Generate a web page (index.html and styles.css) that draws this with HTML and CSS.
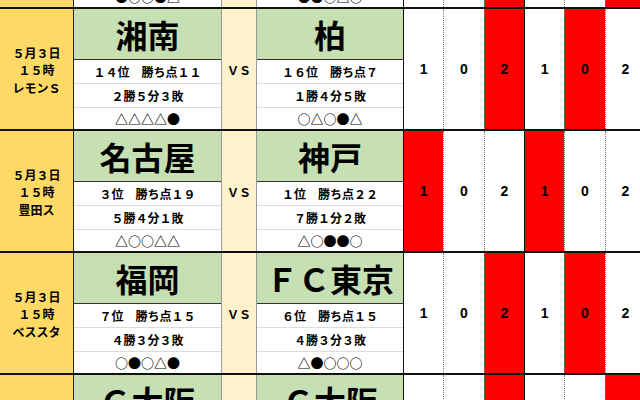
FILE: index.html
```html
<!DOCTYPE html>
<html lang="ja">
<head>
<meta charset="utf-8">
<title>試合予想</title>
<link rel="stylesheet" href="styles.css">
</head>
<body>
<div class="sheet">

  <div class="block">
    <div class="date"><span>５月３日</span><span>１４時</span><span>カシマ</span></div>
    <div class="team home">
      <div class="name">鹿島</div>
      <div class="info">５位　勝ち点１７</div>
      <div class="info">５勝２分３敗</div>
      <div class="info last">●○○●△</div>
    </div>
    <div class="vs">ＶＳ</div>
    <div class="team away">
      <div class="name">京都</div>
      <div class="info">１２位　勝ち点１２</div>
      <div class="info">４勝０分６敗</div>
      <div class="info last">●●○△○</div>
    </div>
    <div class="score major">1</div>
    <div class="score">0</div>
    <div class="score red">2</div>
    <div class="score major">1</div>
    <div class="score">0</div>
    <div class="score red">2</div>
  </div>

  <div class="block">
    <div class="date"><span>５月３日</span><span>１５時</span><span>レモンＳ</span></div>
    <div class="team home">
      <div class="name">湘南</div>
      <div class="info">１４位　勝ち点１１</div>
      <div class="info">２勝５分３敗</div>
      <div class="info last">△△△△●</div>
    </div>
    <div class="vs">ＶＳ</div>
    <div class="team away">
      <div class="name">柏</div>
      <div class="info">１６位　勝ち点７</div>
      <div class="info">１勝４分５敗</div>
      <div class="info last">○△○●△</div>
    </div>
    <div class="score major">1</div>
    <div class="score">0</div>
    <div class="score red">2</div>
    <div class="score major">1</div>
    <div class="score red">0</div>
    <div class="score">2</div>
  </div>

  <div class="block">
    <div class="date"><span>５月３日</span><span>１５時</span><span>豊田ス</span></div>
    <div class="team home">
      <div class="name">名古屋</div>
      <div class="info">３位　勝ち点１９</div>
      <div class="info">５勝４分１敗</div>
      <div class="info last">△○○△△</div>
    </div>
    <div class="vs">ＶＳ</div>
    <div class="team away">
      <div class="name">神戸</div>
      <div class="info">１位　勝ち点２２</div>
      <div class="info">７勝１分２敗</div>
      <div class="info last">△○●●○</div>
    </div>
    <div class="score major red">1</div>
    <div class="score">0</div>
    <div class="score">2</div>
    <div class="score major red">1</div>
    <div class="score">0</div>
    <div class="score">2</div>
  </div>

  <div class="block">
    <div class="date"><span>５月３日</span><span>１５時</span><span>ベススタ</span></div>
    <div class="team home">
      <div class="name">福岡</div>
      <div class="info">７位　勝ち点１５</div>
      <div class="info">４勝３分３敗</div>
      <div class="info last">○●○△●</div>
    </div>
    <div class="vs">ＶＳ</div>
    <div class="team away">
      <div class="name">ＦＣ東京</div>
      <div class="info">６位　勝ち点１５</div>
      <div class="info">４勝３分３敗</div>
      <div class="info last">△●○○○</div>
    </div>
    <div class="score major">1</div>
    <div class="score">0</div>
    <div class="score red">2</div>
    <div class="score major">1</div>
    <div class="score red">0</div>
    <div class="score">2</div>
  </div>

  <div class="block">
    <div class="date"><span>５月３日</span><span>１６時</span><span>パナスタ</span></div>
    <div class="team home">
      <div class="name">Ｇ大阪</div>
      <div class="info">１７位　勝ち点７</div>
      <div class="info">１勝４分５敗</div>
      <div class="info last">●△●○△</div>
    </div>
    <div class="vs">ＶＳ</div>
    <div class="team away">
      <div class="name">Ｃ大阪</div>
      <div class="info">９位　勝ち点１４</div>
      <div class="info">４勝２分４敗</div>
      <div class="info last">○●○●△</div>
    </div>
    <div class="score major">1</div>
    <div class="score">0</div>
    <div class="score red">2</div>
    <div class="score major">1</div>
    <div class="score">0</div>
    <div class="score red">2</div>
  </div>

</div>
</body>
</html>
```

FILE: styles.css
```css
html, body {
  margin: 0;
  padding: 0;
}

body {
  width: 640px;
  height: 400px;
  overflow: hidden;
  background: #ffffff;
  color: #000000;
  font-family: "Noto Sans CJK JP", "Noto Sans", sans-serif;
}

.sheet {
  margin-top: -115px;
}

.block {
  display: grid;
  grid-template-columns: 73px 148px 36px 146px repeat(6, 40.33px);
  height: 122px;
  box-sizing: border-box;
  border-top: 2px solid #111111;
}

.date {
  background: #ffd966;
  display: flex;
  flex-direction: column;
  align-items: center;
  justify-content: center;
  font-size: 12px;
  font-weight: 700;
  line-height: 17.5px;
  padding-top: 2px;
}

.team {
  display: flex;
  flex-direction: column;
  min-width: 0;
}

.home {
  border-left: 1px solid #222222;
}

.name {
  height: 50px;
  background: #c6e0b4;
  border-bottom: 1px solid #333333;
  display: flex;
  align-items: center;
  justify-content: center;
  font-size: 32px;
  font-weight: 700;
  line-height: 1;
  white-space: nowrap;
}

.info {
  height: 23px;
  border-bottom: 1px solid #dcdcdc;
  display: flex;
  align-items: center;
  justify-content: center;
  font-size: 12px;
  font-weight: 700;
  white-space: nowrap;
}

.info.last {
  height: 21px;
  border-bottom: none;
  font-size: 13px;
}

.vs {
  background: #fff2cc;
  border-left: 1px solid #9a9a9a;
  border-right: 1px solid #9a9a9a;
  display: flex;
  align-items: center;
  justify-content: center;
  font-size: 12px;
  font-weight: 700;
}

.score {
  display: flex;
  align-items: center;
  justify-content: center;
  border-left: 1px dotted #777777;
  font-family: "Liberation Sans", Arial, sans-serif;
  font-size: 14px;
  font-weight: 700;
  background: #ffffff;
}

.score.major {
  border-left: 1px solid #111111;
}

.score.red {
  background: #ff0000;
}
```
